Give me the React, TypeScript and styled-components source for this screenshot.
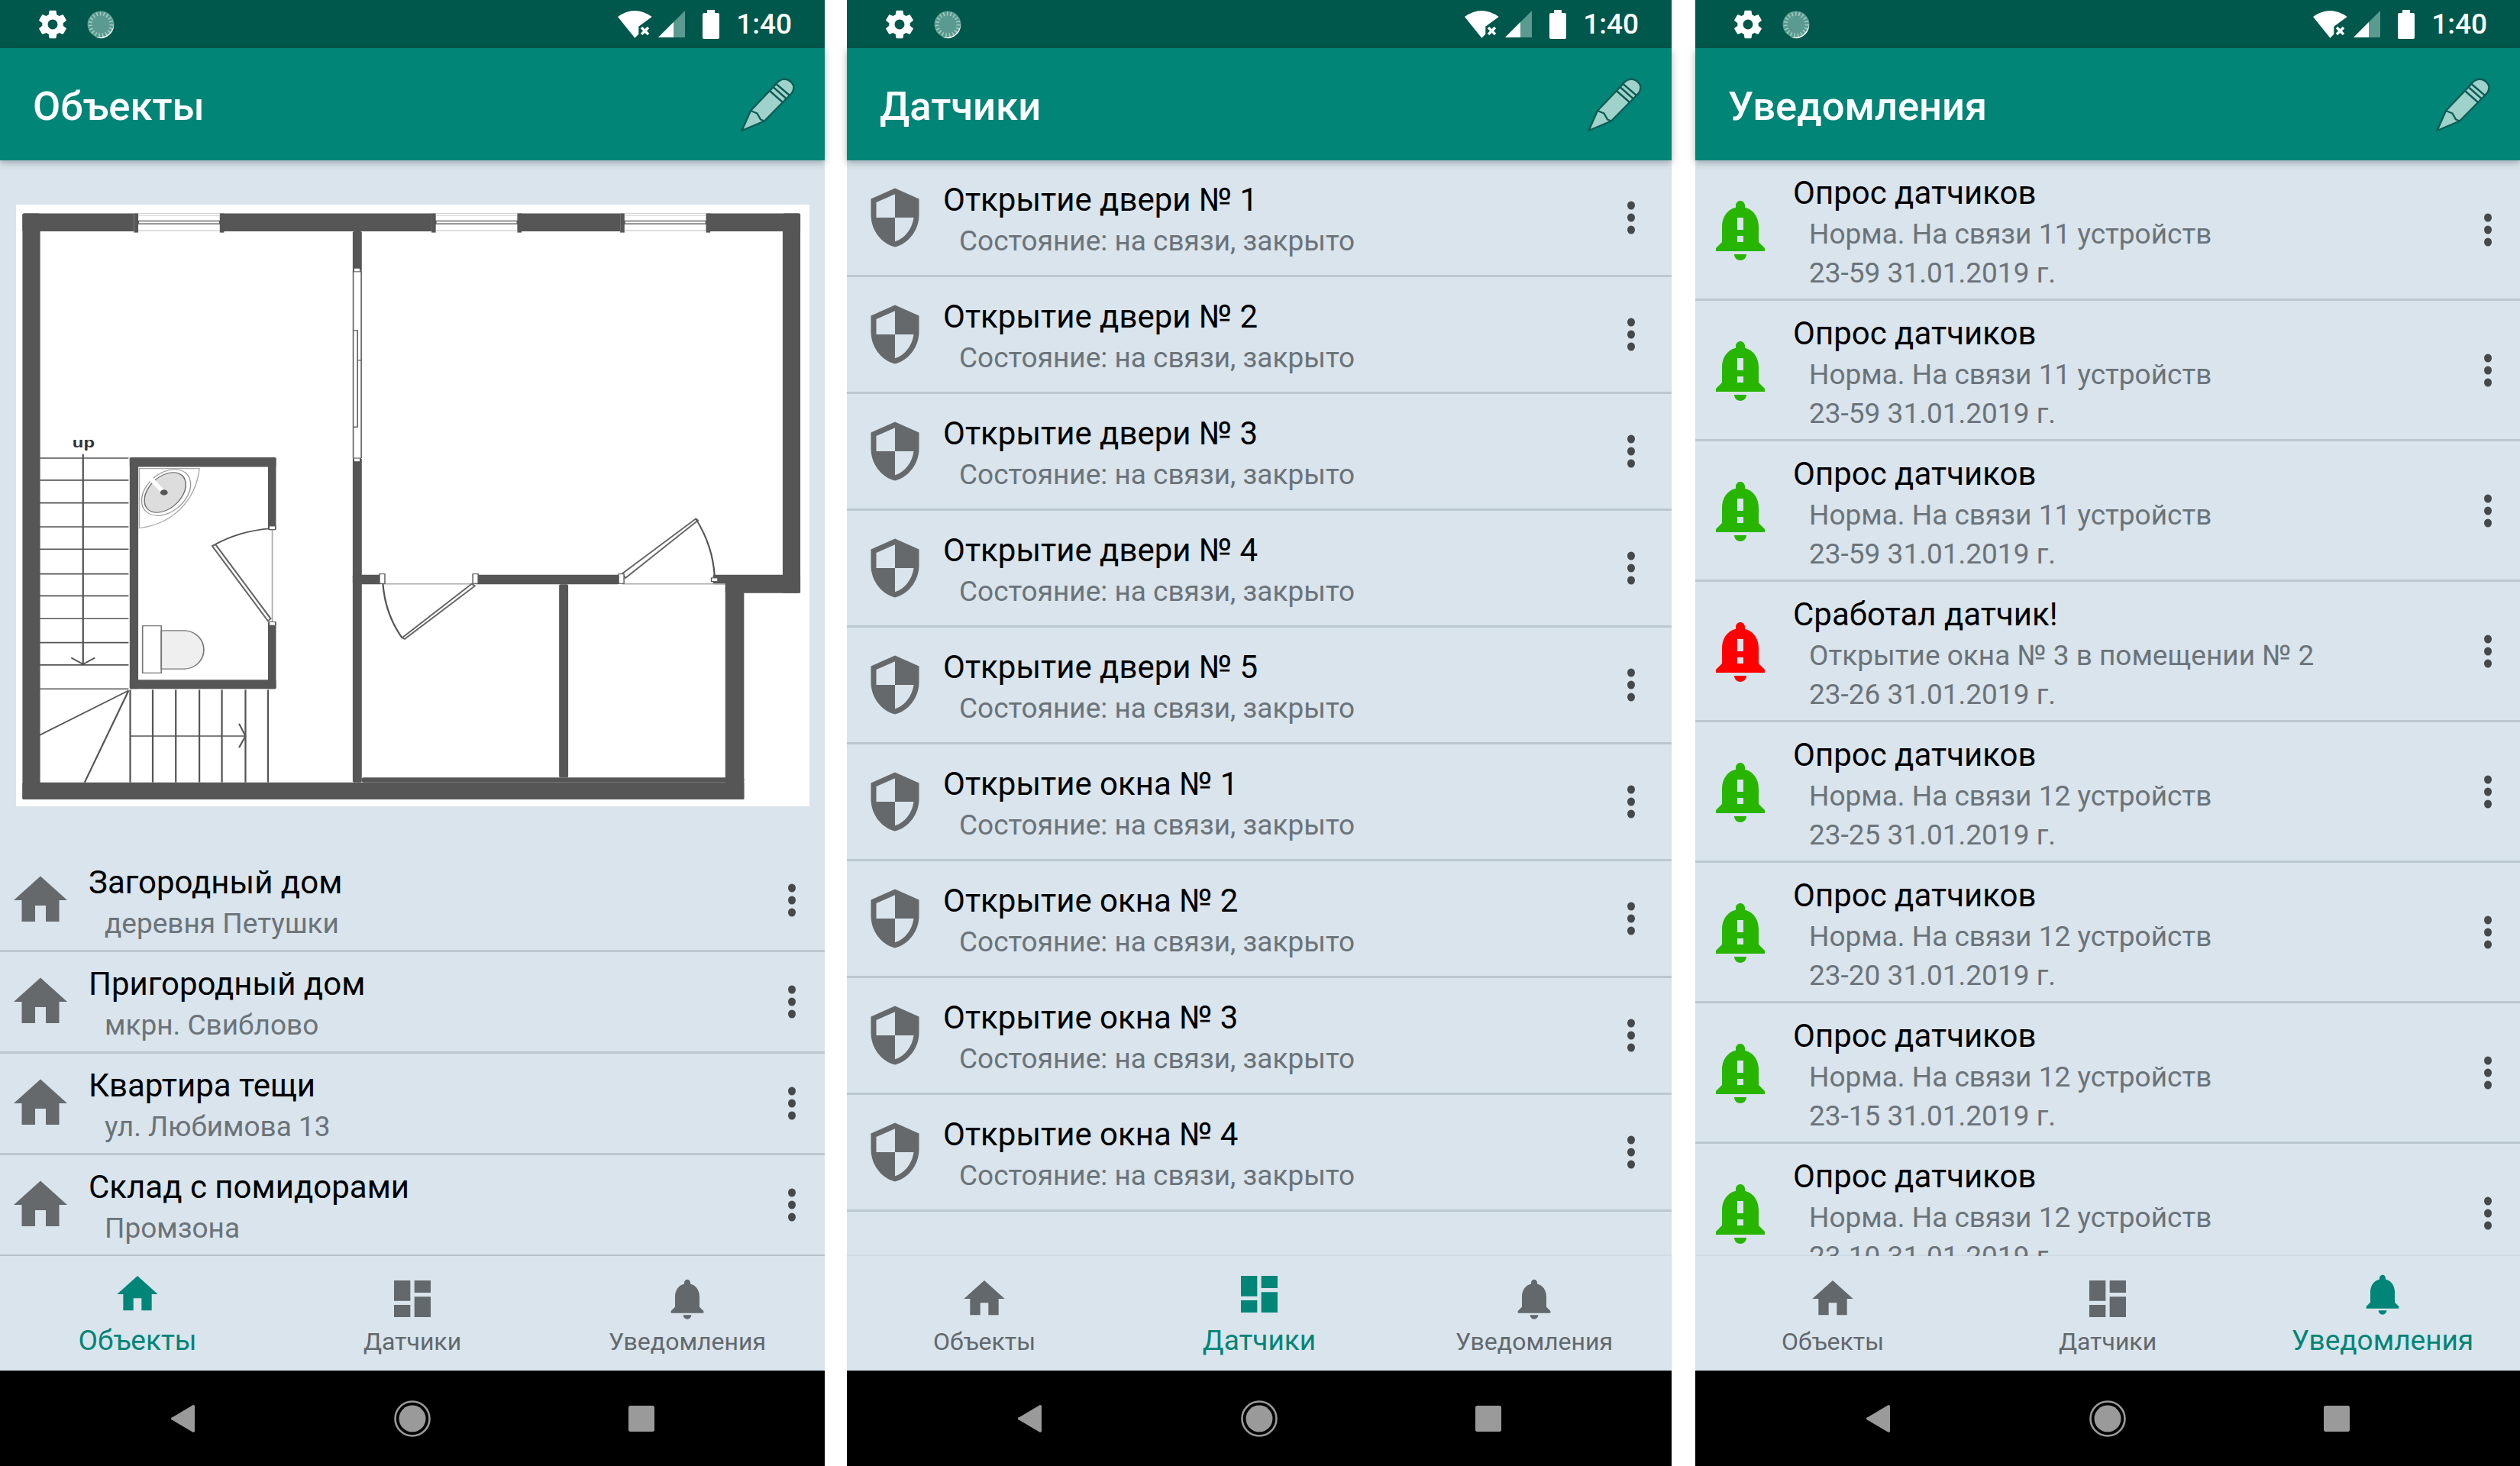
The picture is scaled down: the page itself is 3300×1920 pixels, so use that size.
import React from 'react';
import styled, { createGlobalStyle } from 'styled-components';

const GlobalStyle = createGlobalStyle`
  html, body {
    margin: 0;
    padding: 0;
    background: #fff;
    font-family: Roboto, 'Noto Sans', sans-serif;
  }
`;

const Screens = styled.div`
  display: flex;
  width: 3300px;
  height: 1920px;
  overflow: hidden;
`;

const Phone = styled.section<{ $gap: number }>`
  display: flex;
  flex-direction: column;
  flex: 0 0 1080px;
  height: 1920px;
  margin-left: ${p => p.$gap}px;
  background: #d9e4ec;
`;

const StatusBar = styled.div`
  display: flex;
  align-items: center;
  flex: 0 0 63px;
  padding: 0 43px 0 47px;
  box-sizing: border-box;
  background: #00574b;
`;

const StatusRight = styled.div`
  display: flex;
  align-items: center;
  margin-left: auto;
`;

const Globe = styled.svg`
  margin-left: 23px;
`;

const Time = styled.span`
  margin-left: 22px;
  font-size: 37px;
  font-weight: 500;
  color: #fff;
`;

const BatteryIcon = styled.svg`
  margin-left: 23px;
`;

const SignalIcon = styled.svg`
  margin-left: 8px;
`;

const AppBar = styled.header`
  position: relative;
  z-index: 2;
  display: flex;
  align-items: center;
  justify-content: space-between;
  flex: 0 0 147px;
  padding: 0 39px 0 43px;
  box-sizing: border-box;
  background: #008577;
  box-shadow: 0 3px 9px rgba(60, 70, 80, 0.4);
`;

const Title = styled.h1`
  margin: 4px 0 0;
  font-size: 52.5px;
  font-weight: 500;
  color: #fff;
`;

const Content = styled.main`
  flex: 1;
  min-height: 0;
  overflow: hidden;
`;

const PlanFrame = styled.div`
  width: 1039px;
  height: 788px;
  margin: 58px 0 58px 21px;
  background: #fff;
`;

const PlanSvg = styled.svg`
  display: block;
  width: 100%;
  height: 100%;
`;

const Row = styled.div<{ $height: number; $left: number }>`
  display: flex;
  align-items: center;
  height: ${p => p.$height}px;
  padding-left: ${p => p.$left}px;
  box-sizing: border-box;
  border-bottom: 3px solid #bcc8d0;
`;

const RowIcon = styled.svg`
  flex: none;
`;

const RowText = styled.div<{ $top: number }>`
  flex: 1;
  align-self: flex-start;
  min-width: 0;
  padding: ${p => p.$top}px 0 0 21px;
`;

const RowTitle = styled.div`
  margin-bottom: 2px;
  font-size: 42px;
  line-height: 52px;
  color: #000;
  white-space: nowrap;
`;

const RowSub = styled.div`
  padding-left: 21px;
  font-size: 37px;
  line-height: 51px;
  color: #6b7379;
  white-space: nowrap;
`;

const Kebab = styled.svg<{ $right: number }>`
  flex: none;
  margin-right: ${p => p.$right}px;
`;

const BottomNav = styled.nav`
  display: flex;
  flex: 0 0 150px;
  box-sizing: border-box;
  background: #d9e4ec;
  box-shadow: 0 -1px 2px rgba(90, 110, 120, 0.12);
  position: relative;
`;

const NavItem = styled.div<{ $active: boolean }>`
  display: flex;
  flex: 1;
  flex-direction: column;
  align-items: center;
  padding-top: ${p => (p.$active ? 18 : 24)}px;
  color: ${p => (p.$active ? '#008577' : '#62686c')};
`;

const NavLabel = styled.span<{ $active: boolean }>`
  margin-top: ${p => (p.$active ? 4 : -1)}px;
  font-size: ${p => (p.$active ? 37 : 32)}px;
  line-height: 50px;
`;

const SystemBar = styled.div`
  display: flex;
  align-items: center;
  justify-content: center;
  flex: 0 0 125px;
  background: #000;
`;

const SystemKey = styled.div`
  display: flex;
  justify-content: center;
  width: 300px;
`;

const HOME = 'M10 20v-6h4v6h5v-8h3L12 3 2 12h3v8z';
const DASHBOARD = 'M3 13h8V3H3v10zm0 8h8v-6H3v6zm10 0h8V11h-8v10zm0-18v6h8V3h-8z';
const BELL =
  'M12 22c1.1 0 2-.9 2-2h-4c0 1.1.89 2 2 2zm6-6v-5c0-3.07-1.64-5.64-4.5-6.32V4c0-.83-.67-1.5-1.5-1.5s-1.5.67-1.5 1.5v.68C7.63 5.36 6 7.92 6 11v5l-2 2v1h16v-1l-2-2z';
const BELL_ALERT =
  'M18 16v-5c0-3.07-1.64-5.64-4.5-6.32V4c0-.83-.67-1.5-1.5-1.5s-1.5.67-1.5 1.5v.68C7.63 5.36 6 7.92 6 11v5l-2 2v1h16v-1l-2-2zm-5 0h-2v-2h2v2zm0-4h-2V8h2v4zm-1 10c1.1 0 2-.9 2-2h-4c0 1.1.9 2 2 2z';
const SHIELD =
  'M12 1L3 5v6c0 5.55 3.84 10.74 9 12 5.16-1.26 9-6.45 9-12V5l-9-4zm0 10.99h7c-.53 4.12-3.28 7.79-7 8.94V12H5V6.3l7-3.11v8.8z';
const GEAR =
  'M19.43 12.98c.04-.32.07-.64.07-.98s-.03-.66-.07-.98l2.11-1.65c.19-.15.24-.42.12-.64l-2-3.46c-.12-.22-.39-.3-.61-.22l-2.49 1c-.52-.4-1.08-.73-1.69-.98l-.38-2.65C14.46 2.18 14.25 2 14 2h-4c-.25 0-.46.18-.49.42l-.38 2.65c-.61.25-1.17.59-1.69.98l-2.49-1c-.23-.09-.49 0-.61.22l-2 3.46c-.13.22-.07.49.12.64l2.11 1.65c-.04.32-.07.65-.07.98s.03.66.07.98l-2.11 1.65c-.19.15-.24.42-.12.64l2 3.46c.12.22.39.3.61.22l2.49-1c.52.4 1.08.73 1.69.98l.38 2.65c.03.24.24.42.49.42h4c.25 0 .46-.18.49-.42l.38-2.65c.61-.25 1.17-.59 1.69-.98l2.49 1c.23.09.49 0 .61-.22l2-3.46c.12-.22.07-.49-.12-.64l-2.11-1.65zM12 15.5c-1.93 0-3.5-1.57-3.5-3.5s1.57-3.5 3.5-3.5 3.5 1.57 3.5 3.5-1.57 3.5-3.5 3.5z';

const MaterialIcon = ({ d, size, color }: { d: string; size: number; color?: string }) => (
  <RowIcon width={size} height={size} viewBox="0 0 24 24" fill={color || 'currentColor'}>
    <path d={d} fillRule="evenodd" />
  </RowIcon>
);

const MoreIcon = ({ right }: { right: number }) => (
  <Kebab $right={right} width="12" height="44" viewBox="0 0 12 44" fill="#45494c">
    <ellipse cx="6" cy="6" rx="5" ry="5.5" />
    <ellipse cx="6" cy="22" rx="5" ry="5.5" />
    <ellipse cx="6" cy="38" rx="5" ry="5.5" />
  </Kebab>
);

const Status = () => (
  <StatusBar>
    <svg width="44" height="44" viewBox="0 0 24 24" fill="#fff">
      <path d={GEAR} />
    </svg>
    <Globe width="36" height="38" viewBox="0 0 36 38">
      <circle cx="18" cy="19" r="17.5" fill="#5a9a90" />
      <circle cx="18" cy="19" r="14" fill="none" stroke="#a4cbc5" strokeWidth="5" strokeDasharray="1.6 3" />
      <path d="M35 18a17 18 0 0 1-25 17a19 19 0 0 0 25-17z" fill="#fff" />
    </Globe>
    <StatusRight>
      <svg width="45" height="36" viewBox="0 0 45 36" fill="#fff">
        <path d="M0 8Q22-8 44.7 8L27.3 20.7V30.7L22.3 35.7z" strokeLinejoin="round" />
        <path d="M31 22l9 9m0-9l-9 9" stroke="#fff" strokeWidth="3.5" />
      </svg>
      <SignalIcon width="35" height="36" viewBox="0 0 35 36">
        <path d="M35 0V35H0z" fill="#5a9a90" />
        <path d="M20 15V35H0z" fill="#fff" />
      </SignalIcon>
      <BatteryIcon width="22" height="38" viewBox="0 0 22 38" fill="#fff">
        <path d="M6 0h10v4h4a2 2 0 0 1 2 2v30a2 2 0 0 1-2 2H2a2 2 0 0 1-2-2V6a2 2 0 0 1 2-2h4z" />
      </BatteryIcon>
      <Time>1:40</Time>
    </StatusRight>
  </StatusBar>
);

const Pencil = () => (
  <svg width="71" height="72" viewBox="0 0 71 72" fill="#9fd2ca" stroke="#0f5c55" strokeWidth="2.4" strokeLinejoin="round">
    <path d="M1.5 70L13 44L44 11.5Q50 3 57 2.5Q66 3 69.5 12Q69.5 19 65 23L31 57.5z" />
    <path d="M13 44L21.5 47.5L26 55.5L31 57.5" fill="none" />
    <path d="M38 18L55 33M42.5 13L60 28.5M46.5 9L64 24" fill="none" />
  </svg>
);

const WALLS = [
  [42, 37, 1451, 45], [42, 37, 33, 1468], [1460, 37, 33, 951], [42, 1462, 1346, 43],
  [658, 82, 17, 98], [658, 650, 17, 812], [658, 942, 54, 24], [885, 942, 270, 24],
  [1330, 942, 163, 24], [1353, 960, 140, 28], [1353, 960, 35, 545], [675, 1450, 713, 12],
  [1043, 966, 17, 484], [242, 648, 273, 24], [242, 648, 16, 580], [242, 1205, 273, 23],
  [500, 648, 15, 182], [500, 1060, 15, 168],
];
const WINDOWS = [250, 805, 1157];
const FLIGHT_Y = [650, 705, 762, 822, 878, 940, 995, 1052, 1112, 1168, 1228];
const FLIGHT_X = [243, 285, 328, 372, 414, 458, 500];

const FloorPlan = () => (
  <PlanFrame>
    <PlanSvg viewBox="30 15 1480 1507" preserveAspectRatio="none">
      <g fill="#565656">
        {WALLS.map(([x, y, w, h]) => (
          <rect key={`${x}-${y}`} x={x} y={y} width={w} height={h} rx="3" />
        ))}
      </g>
      {WINDOWS.map(x => (
        <g key={x}>
          <rect x={x} y="37" width="165" height="45" fill="#fff" />
          <rect x={x} y="37" width="8" height="48" fill="#565656" />
          <rect x={x + 160} y="37" width="8" height="48" fill="#565656" />
          <rect x={x + 8} y="56" width="152" height="7" fill="#fff" stroke="#565656" strokeWidth="2.5" />
          <path d={`M${x + 8} 42H${x + 160}M${x + 8} 80H${x + 160}`} stroke="#bbb" strokeWidth="1.5" />
        </g>
      ))}
      <g fill="none" stroke="#555" strokeWidth="3.2">
        {FLIGHT_Y.map(y => (
          <path key={y} d={`M72 ${y}H240`} />
        ))}
        {FLIGHT_X.map(x => (
          <path key={x} d={`M${x} 1230V1462`} />
        ))}
        <path d="M155 640V1166M133 1150L155 1166L177 1150" />
        <path d="M243 1346H458M446 1315L458 1346L446 1375" />
        <path d="M240 1232L72 1345M240 1232L158 1462" />
        {/* сдвижная дверь между комнатами */}
        <path d="M659 180V650M674 180V650M659 330H667V572H659M667 405H674V650" stroke="#666" strokeWidth="2.4" />
        {/* двери */}
        <path d="M508 830V1060" stroke="#aaa" strokeWidth="2.4" />
        <path d="M506 826Q445 832 396 870" />
        <path d="M396 870L500 1058L505 1052L402 866z" stroke="#666" />
        <path d="M712 965H885M1160 965H1353" stroke="#aaa" strokeWidth="2.4" />
        <path d="M714 960Q718 1040 750 1100" />
        <path d="M750 1100L880 965L886 970L755 1103z" stroke="#666" />
        <path d="M1160 940L1298 802L1302 806L1167 950z" stroke="#666" />
        <path d="M1298 802Q1330 870 1333 946" />
        {/* умывальник */}
        <path d="M260 676H372C365 760 320 815 260 825z" stroke="#aaa" strokeWidth="2" />
        <ellipse cx="310" cy="736" rx="40" ry="62" transform="rotate(28 310 736)" stroke="#999" strokeWidth="2" />
        <ellipse cx="308" cy="736" rx="33" ry="54" transform="rotate(28 308 736)" fill="#ddd" stroke="#666" strokeWidth="2" />
        <path d="M280 700L303 732" stroke="#fff" strokeWidth="9" />
        <circle cx="306" cy="736" r="7" fill="#555" stroke="none" />
        {/* унитаз */}
        <rect x="266" y="1070" width="35" height="118" fill="#fff" stroke="#777" strokeWidth="2.4" />
        <path d="M301 1082H345C392 1088 392 1172 345 1178H301z" fill="#efefef" stroke="#777" strokeWidth="2.4" />
      </g>
      <g fill="#fff" stroke="#555" strokeWidth="2">
        {[[660, 174], [660, 650], [502, 820], [502, 1060], [1327, 950]].map(([x, y]) => (
          <rect key={`${x}-${y}`} x={x} y={y} width="12" height="9" />
        ))}
        {[[708, 940], [882, 940], [1154, 940]].map(([x, y]) => (
          <rect key={`${x}-${y}`} x={x} y={y} width="10" height="24" />
        ))}
      </g>
      <text x="156" y="624" fontSize="34" fontFamily="Liberation Sans, sans-serif" fontWeight="700" textAnchor="middle" fill="#333">
        up
      </text>
    </PlanSvg>
  </PlanFrame>
);

const BottomTabs = ({ active }: { active: number }) => {
  const tabs = [
    { label: 'Объекты', icon: HOME },
    { label: 'Датчики', icon: DASHBOARD },
    { label: 'Уведомления', icon: BELL },
  ];
  return (
    <BottomNav>
      {tabs.map((t, i) => (
        <NavItem key={t.label} $active={i === active}>
          <MaterialIcon d={t.icon} size={64} />
          <NavLabel $active={i === active}>{t.label}</NavLabel>
        </NavItem>
      ))}
    </BottomNav>
  );
};

const SystemKeys = () => (
  <SystemBar>
    <SystemKey>
      <svg width="32" height="38" viewBox="0 0 32 38" fill="#9a9a9a">
        <path d="M29 1a2 2 0 0 1 2 2v32a2 2 0 0 1-2 2L2 21a2 2 0 0 1 0-4z" />
      </svg>
    </SystemKey>
    <SystemKey>
      <svg width="50" height="50" viewBox="0 0 50 50" fill="#9a9a9a">
        <circle cx="25" cy="25" r="17.5" />
        <circle cx="25" cy="25" r="22.5" fill="none" stroke="#9a9a9a" strokeWidth="2.6" />
      </svg>
    </SystemKey>
    <SystemKey>
      <svg width="34" height="34" viewBox="0 0 34 34" fill="#9a9a9a">
        <rect width="34" height="34" rx="2.5" />
      </svg>
    </SystemKey>
  </SystemBar>
);

const OBJECTS = [
  ['Загородный дом', 'деревня Петушки'],
  ['Пригородный дом', 'мкрн. Свиблово'],
  ['Квартира тещи', 'ул. Любимова 13'],
  ['Склад с помидорами', 'Промзона'],
];

const SENSORS = [
  'Открытие двери № 1',
  'Открытие двери № 2',
  'Открытие двери № 3',
  'Открытие двери № 4',
  'Открытие двери № 5',
  'Открытие окна № 1',
  'Открытие окна № 2',
  'Открытие окна № 3',
  'Открытие окна № 4',
];

const NOTIFICATIONS = [
  { title: 'Опрос датчиков', text: 'Норма. На связи 11 устройств', time: '23-59 31.01.2019 г.', color: '#27b500' },
  { title: 'Опрос датчиков', text: 'Норма. На связи 11 устройств', time: '23-59 31.01.2019 г.', color: '#27b500' },
  { title: 'Опрос датчиков', text: 'Норма. На связи 11 устройств', time: '23-59 31.01.2019 г.', color: '#27b500' },
  { title: 'Сработал датчик!', text: 'Открытие окна № 3 в помещении № 2', time: '23-26 31.01.2019 г.', color: '#ff0000' },
  { title: 'Опрос датчиков', text: 'Норма. На связи 12 устройств', time: '23-25 31.01.2019 г.', color: '#27b500' },
  { title: 'Опрос датчиков', text: 'Норма. На связи 12 устройств', time: '23-20 31.01.2019 г.', color: '#27b500' },
  { title: 'Опрос датчиков', text: 'Норма. На связи 12 устройств', time: '23-15 31.01.2019 г.', color: '#27b500' },
  { title: 'Опрос датчиков', text: 'Норма. На связи 12 устройств', time: '23-10 31.01.2019 г.', color: '#27b500' },
];

export default function App() {
  return (
    <>
      <GlobalStyle />
      <Screens>
        <Phone $gap={0}>
          <Status />
          <AppBar>
            <Title>Объекты</Title>
            <Pencil />
          </AppBar>
          <Content>
            <FloorPlan />
            {OBJECTS.map(([name, place]) => (
              <Row key={name} $height={133} $left={11}>
                <MaterialIcon d={HOME} size={84} color="#66696c" />
                <RowText $top={16}>
                  <RowTitle>{name}</RowTitle>
                  <RowSub>{place}</RowSub>
                </RowText>
                <MoreIcon right={37} />
              </Row>
            ))}
          </Content>
          <BottomTabs active={0} />
          <SystemKeys />
        </Phone>

        <Phone $gap={29}>
          <Status />
          <AppBar>
            <Title>Датчики</Title>
            <Pencil />
          </AppBar>
          <Content>
            {SENSORS.map(name => (
              <Row key={name} $height={153} $left={21}>
                <MaterialIcon d={SHIELD} size={84} color="#66696c" />
                <RowText $top={26}>
                  <RowTitle>{name}</RowTitle>
                  <RowSub>Состояние: на связи, закрыто</RowSub>
                </RowText>
                <MoreIcon right={47} />
              </Row>
            ))}
          </Content>
          <BottomTabs active={1} />
          <SystemKeys />
        </Phone>

        <Phone $gap={31}>
          <Status />
          <AppBar>
            <Title>Уведомления</Title>
            <Pencil />
          </AppBar>
          <Content>
            {NOTIFICATIONS.map((n, i) => (
              <Row key={i} $height={184} $left={11}>
                <MaterialIcon d={BELL_ALERT} size={96} color={n.color} />
                <RowText $top={17}>
                  <RowTitle>{n.title}</RowTitle>
                  <RowSub>{n.text}</RowSub>
                  <RowSub>{n.time}</RowSub>
                </RowText>
                <MoreIcon right={36} />
              </Row>
            ))}
          </Content>
          <BottomTabs active={2} />
          <SystemKeys />
        </Phone>
      </Screens>
    </>
  );
}
